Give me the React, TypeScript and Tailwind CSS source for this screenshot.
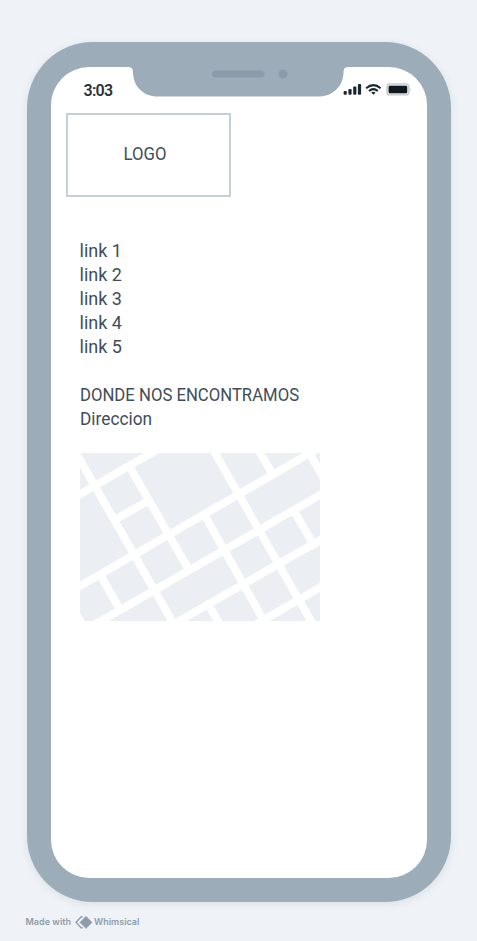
const links = ['link 1', 'link 2', 'link 3', 'link 4', 'link 5'];

function StatusIcons() {
  return (
    <svg width="70" height="16" viewBox="0 0 70 16" className="block">
      <g fill="#1b2630">
        <rect x="1.6" y="9" width="3.2" height="3.8" rx="1" />
        <rect x="6.4" y="7" width="3.2" height="5.8" rx="1" />
        <rect x="11.2" y="4.5" width="3.2" height="8.3" rx="1" />
        <rect x="15.9" y="2" width="3.2" height="10.8" rx="1" />
      </g>
      <g fill="none" stroke="#1b2630" strokeWidth="2">
        <path d="M24.2 6.2 Q31.4 0 38.6 6.2" />
        <path d="M27 9 Q31.4 5.2 35.8 9" />
      </g>
      <path d="M29.2 10.4 Q31.4 8.9 33.6 10.4 L31.4 12.7 Z" fill="#1b2630" />
      <rect x="44.9" y="1.9" width="22" height="11" rx="3" fill="#e4e4e4" stroke="#cbcbcb" strokeWidth="1.4" />
      <rect x="46.6" y="3.7" width="18.6" height="7.6" rx="1.4" fill="#101920" />
      <path d="M67.9 5.6 Q69.7 7.5 67.9 9.4 Z" fill="#c4c7c9" />
    </svg>
  );
}

function StreetMap() {
  return (
    <svg width="240" height="168" viewBox="0 0 240 168" className="ml-[29px] mt-[22px] block">
      <rect width="240" height="168" fill="#ebeff4" />
      <g stroke="#fff" strokeWidth="7.8" fill="none">
        <path d="M-7 45.2 L85 -7.8" />
        <path d="M-7 137 L245 -8.5" />
        <path d="M8 175.5 L250 36.2" />
        <path d="M86 175.5 L250 81.5" />
        <path d="M168 176 L250 128.7" />
        <path d="M37 65.3 L67 48.7" />
        <path d="M-8 -7 L96 175" />
        <path d="M50.3 15 L109 117" />
        <path d="M131 -7 L235 175" />
        <path d="M176.3 -7 L193 22" />
        <path d="M229.5 0 L245 28" />
        <path d="M214.8 59.3 L235.5 95" />
        <path d="M125.3 63.5 L188 175" />
        <path d="M130.3 155 L142 175" />
        <path d="M21.5 124 L38.5 154" />
      </g>
      <path d="M0 160 V168 H4.6 Z" fill="#fff" />
    </svg>
  );
}

function Notch() {
  return (
    <svg width="220" height="31" viewBox="0 0 220 31" className="absolute left-[77px] top-[-1px]">
      <path d="M0 0 V1 Q5 1 5 6 C5 20 15 30.5 30 30.5 H190 C205 30.5 215.5 20 215.5 6 Q215.5 1 220 1 V0 Z" fill="#9dacb9" />
      <rect x="84" y="4.5" width="52.5" height="7" rx="3.5" fill="#8b9bab" />
      <circle cx="155" cy="8" r="4.5" fill="#8b9bab" />
    </svg>
  );
}

export default function App() {
  return (
    <div className="h-[941px] w-[477px] overflow-hidden bg-[#eff3f7] pl-[26.5px] pt-[42px] font-['Roboto',sans-serif]">
      <div className="h-[860px] w-[424px] rounded-[66px] bg-[#9dacb9] px-6 pt-[25px] shadow-[0_2px_8px_rgba(70,90,110,0.12)]">
        <div className="relative h-[811px] w-[376px] rounded-[38px] bg-white">
          <Notch />
          <div className="flex h-[46px] justify-between pl-[33px] pr-[15px] pt-[15px]">
            <span className="text-[16px] font-semibold leading-[17px] tracking-[-0.7px] text-[#26323d]">3:03</span>
            <StatusIcons />
          </div>
          <div className="ml-[15px] flex h-[84px] w-[165px] items-center justify-center border-2 border-[#c3d0dc] pb-[3px] pr-[6px] text-[18px] text-[#3f4d59]">
            <span className="inline-block origin-center scale-x-[0.93]">LOGO</span>
          </div>
          <div className="ml-[29px] mt-[42px] text-[18px] leading-6 text-[#3f4d59]">
            {links.map((link) => (
              <div key={link}>{link}</div>
            ))}
            <div className="mt-6 w-[260px] origin-left scale-x-[0.928] whitespace-nowrap">DONDE NOS ENCONTRAMOS</div>
            <div className="w-[120px] origin-left scale-x-[0.96]">Direccion</div>
          </div>
          <StreetMap />
        </div>
      </div>
      <div className="-ml-px mt-[12px] flex h-4 items-center text-[9px] font-semibold text-[#8e9baa] font-['Inter',sans-serif]">
        <span className="tracking-[0.03px]">Made with</span>
        <svg width="18" height="13" viewBox="0 0 18 13" className="ml-[4px] mr-px">
          <path d="M7.8 1 L6.3 0.7 L1 6.3 L6.3 12 L7.8 11.5" fill="none" stroke="#8e9baa" strokeWidth="1.3" />
          <path d="M11 0.5 L16.8 6.4 L11 12.3 L5.2 6.4 Z" fill="#8e9baa" stroke="#8e9baa" strokeLinejoin="round" />
        </svg>
        <span>Whimsical</span>
      </div>
    </div>
  );
}
